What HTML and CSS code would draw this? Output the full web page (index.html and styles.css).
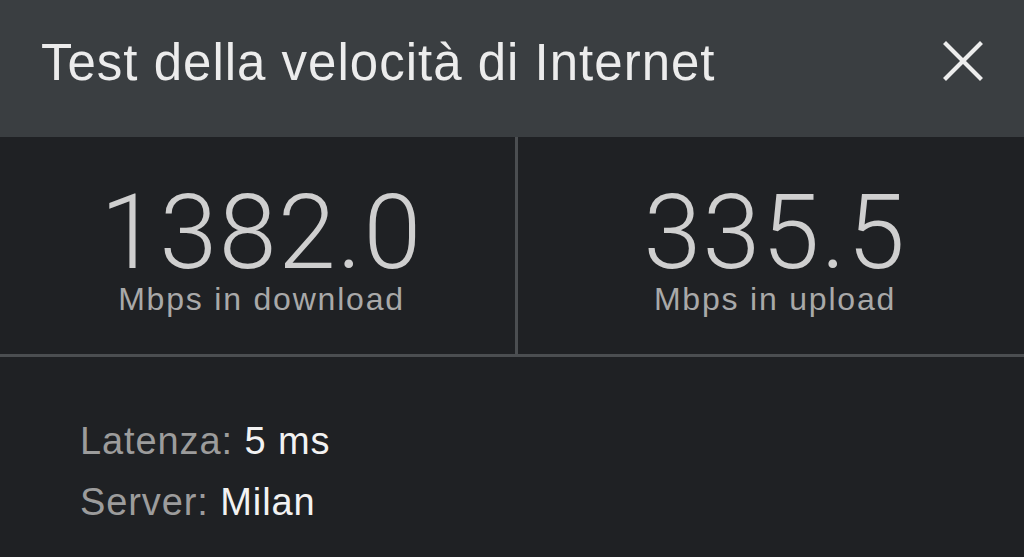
FILE: index.html
```html
<!DOCTYPE html>
<html lang="it">
<head>
<meta charset="utf-8">
<link rel="stylesheet" href="styles.css">
</head>
<body>
<div class="panel">
  <header class="head">
    <h1 class="title">Test della velocità di Internet</h1>
    <button class="close" aria-label="Chiudi">
      <svg width="40" height="40" viewBox="0 0 40 40"><path d="M3 3 L37 37 M37 3 L3 37" stroke="#ededed" stroke-width="4.2" stroke-linecap="square" fill="none"/></svg>
    </button>
  </header>
  <section class="speeds">
    <div class="speed">
      <div class="num">1382.0</div>
      <div class="unit">Mbps in download</div>
    </div>
    <div class="speed">
      <div class="num">335.5</div>
      <div class="unit">Mbps in upload</div>
    </div>
  </section>
  <section class="info">
    <div class="row"><span class="lbl">Latenza:</span> <span class="val">5 ms</span></div>
    <div class="row"><span class="lbl">Server:</span> <span class="val">Milan</span></div>
  </section>
</div>
</body>
</html>
```
FILE: styles.css
```css
* { box-sizing: border-box; margin: 0; padding: 0; }
html, body { width: 1024px; height: 557px; overflow: hidden; background: #1f2124; }
body { font-family: "Liberation Sans", Arial, sans-serif; }
.panel { width: 1024px; height: 557px; display: flex; flex-direction: column; }
.head {
  height: 137px; background: #3a3e41;
  display: flex; align-items: center; justify-content: space-between;
  padding: 0 41px 0 41px;
}
.title { font-weight: 400; font-size: 51px; color: #ececec; letter-spacing: 1px; margin-top: -12px; }
.close { background: none; border: 0; width: 40px; height: 40px; margin-top: -16px; display: flex; }
.speeds { display: grid; grid-template-columns: 515px 3px 1fr; height: 220px; border-bottom: 3px solid #4b4e51; }
.speeds::before { content: ""; grid-column: 2; grid-row: 1; background: #4b4e51; }
.speed { display: flex; flex-direction: column; align-items: center; padding-top: 51px; }
.speed:first-child { grid-column: 1; grid-row: 1; padding-left: 8px; }
.speed:last-child { grid-column: 3; grid-row: 1; padding-left: 8px; }
.num { font-family: Roboto, "Liberation Sans", sans-serif; font-weight: 300; font-size: 104px; line-height: 90px; color: #cfcfcf; letter-spacing: 1.5px; }
.unit { font-size: 32px; color: #a9a9a9; line-height: 36px; margin-top: 3px; letter-spacing: 1.8px; }
.info { padding: 54px 0 0 80px; }
.row { font-size: 38px; line-height: 61px; letter-spacing: 0.9px; }
.lbl { color: #9c9c9c; }
.val { color: #f2f2f2; }
```
